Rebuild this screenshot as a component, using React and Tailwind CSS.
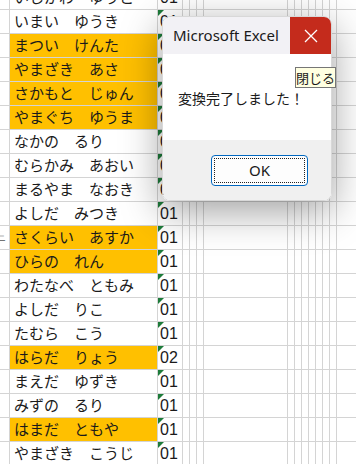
import React from 'react';

const rows = [
  { name: 'いしかわ　ゆうと', code: '01' },
  { name: 'いまい　ゆうき', code: '01' },
  { name: 'まつい　けんた', code: '01', hi: true },
  { name: 'やまざき　あさ', code: '01', hi: true },
  { name: 'さかもと　じゅん', code: '01', hi: true },
  { name: 'やまぐち　ゆうま', code: '01', hi: true },
  { name: 'なかの　るり', code: '01' },
  { name: 'むらかみ　あおい', code: '01' },
  { name: 'まるやま　なおき', code: '01' },
  { name: 'よしだ　みつき', code: '01' },
  { name: 'さくらい　あすか', code: '01', hi: true, mark: true },
  { name: 'ひらの　れん', code: '01', hi: true },
  { name: 'わたなべ　ともみ', code: '01' },
  { name: 'よしだ　りこ', code: '01' },
  { name: 'たむら　こう', code: '01' },
  { name: 'はらだ　りょう', code: '02', hi: true },
  { name: 'まえだ　ゆずき', code: '01' },
  { name: 'みずの　るり', code: '01' },
  { name: 'はまだ　ともや', code: '01', hi: true },
  { name: 'やまざき　こうじ', code: '01' },
];

const line = 'border-r border-[#d4d4d4] h-full shrink-0';

const Row = ({ r }) => (
  <div className="flex h-[24px] border-b border-[#d4d4d4] box-border">
    <div className={`${line} w-[10px] overflow-hidden flex items-center`}>
      {r.mark && <span className="text-[9px] leading-none text-[#555] -ml-[3px]">ニ</span>}
    </div>
    <div
      className={`${line} w-[148px] flex items-center pl-[4px] text-[15px] text-[#1a1a1a] whitespace-pre ${r.hi ? 'bg-[#ffc000]' : ''}`}
      style={{ fontFamily: '"Noto Sans CJK JP", sans-serif' }}
    >
      {r.name}
    </div>
    <div className={`${line} w-[25px] relative flex items-center pl-[2px] text-[16px] text-[#1a1a1a] font-['Liberation_Sans',sans-serif]`}>
      <span className="absolute left-0 top-0 w-0 h-0 border-t-[6px] border-t-[#1d7b3a] border-r-[6px] border-r-transparent" />
      {r.code}
    </div>
    <div className={`${line} w-[7px]`} />
    <div className={`${line} w-[7px]`} />
    <div className={`${line} w-[7px]`} />
    <div className={`${line} w-[84px]`} />
    {[0, 1, 2, 3, 4, 5, 6].map((i) => (
      <div key={i} className={`${line} w-[7px]`} />
    ))}
    <div className="flex-1" />
  </div>
);

const App = () => {
  return (
    <div className="relative w-[356px] h-[464px] overflow-hidden bg-white">
      <div className="-mt-[14px]">
        {rows.map((r, i) => (
          <Row key={i} r={r} />
        ))}
      </div>

      <div className="absolute left-[162px] top-[16px] w-[170px] h-[185px] rounded-lg overflow-hidden flex flex-col shadow-[0_10px_40px_rgba(0,0,0,0.38)] border border-[#d8d8d8]">
        <div className="flex h-[37px] bg-[#f2f1f5] shrink-0">
          <div className="flex-1 flex items-center pl-[10px] text-[15px] text-[#1a1a1a] font-['Noto_Sans',sans-serif]">
            Microsoft Excel
          </div>
          <div className="w-[41px] bg-[#c42b1c] flex items-center justify-center">
            <svg width="14" height="14" viewBox="0 0 14 14">
              <path d="M1 1L13 13M13 1L1 13" stroke="#fff" strokeWidth="1.3" />
            </svg>
          </div>
        </div>
        <div className="h-[86px] bg-white flex items-center pl-[15px] pt-[2px] text-[14px] text-[#1a1a1a] font-['Noto_Sans_CJK_JP',sans-serif]">
          変換完了しました！
        </div>
        <div className="flex-1 bg-[#f0f0f0] flex justify-end items-start pt-[15px] pr-[23px]">
          <div className="w-[97px] h-[31px] rounded-[4px] border-[1.5px] border-[#0067c0] bg-[#fdfdfd] p-[2px]">
            <div className="w-full h-full border border-dotted border-[#222] flex items-center justify-center text-[15px] text-[#1a1a1a] font-['Noto_Sans',sans-serif]">
              OK
            </div>
          </div>
        </div>
      </div>

      <div className="absolute left-[295px] top-[67px] w-[41px] h-[21px] bg-[#ffffe1] border border-[#767676] flex items-center justify-center whitespace-nowrap leading-none text-[13px] text-[#1a1a1a] font-['Noto_Sans_CJK_JP',sans-serif]">
        閉じる
      </div>
    </div>
  );
};

export default App;
